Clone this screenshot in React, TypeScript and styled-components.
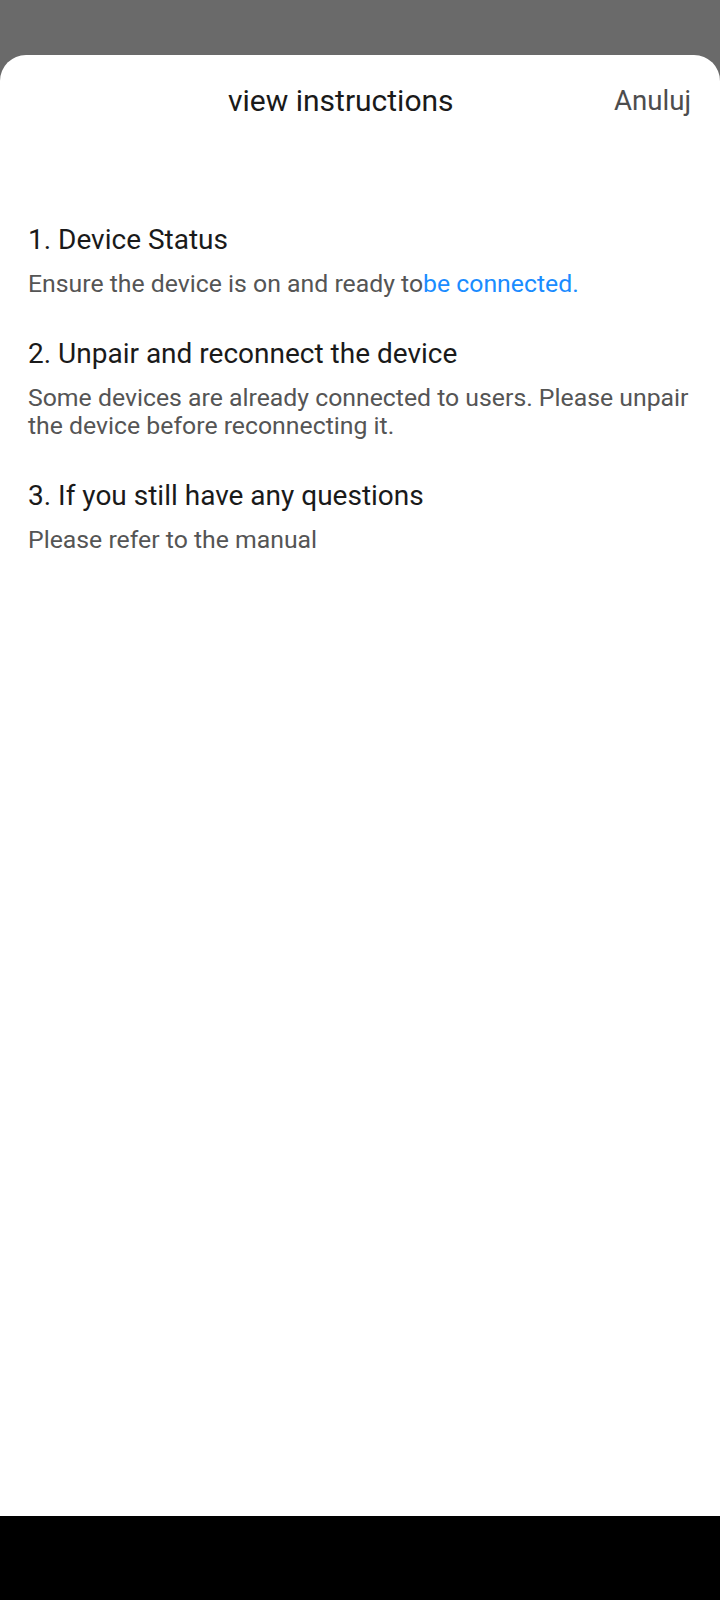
import React from "react";
import styled, { createGlobalStyle } from "styled-components";

const Global = createGlobalStyle`
  html, body { margin: 0; padding: 0; background: #6a6a6a; }
  body { font-family: Roboto, "Noto Sans", sans-serif; }
  * { box-sizing: border-box; }
`;

const Screen = styled.div`
  width: 720px;
  height: 1600px;
  display: flex;
  flex-direction: column;
  background: #6a6a6a;
`;

const Backdrop = styled.div`
  height: 55px;
  flex: none;
`;

const Sheet = styled.div`
  flex: 1;
  background: #ffffff;
  border-radius: 26px 26px 0 0;
  display: flex;
  flex-direction: column;
`;

const Header = styled.div`
  height: 90px;
  display: flex;
  align-items: center;
  padding: 0 29px 0 228px;
`;

const Title = styled.div`
  flex: 1;
  font-size: 30px;
  color: #1a1a1a;
`;

const Cancel = styled.button`
  border: none;
  background: none;
  padding: 0;
  font-family: inherit;
  font-size: 27.6px;
  color: #4d4d4d;
`;

const Steps = styled.div`
  display: flex;
  flex-direction: column;
  gap: 38px;
  padding: 77px 24px 0 28px;
`;

const Step = styled.div`
  display: flex;
  flex-direction: column;
  gap: 12px;
`;

const StepTitle = styled.div`
  font-size: 28px;
  line-height: 36px;
  color: #1a1a1a;
`;

const StepText = styled.div`
  font-size: 24.8px;
  line-height: 28px;
  color: #555555;
`;

const Link = styled.span`
  color: #1a8cff;
`;

const NavBar = styled.div`
  height: 84px;
  flex: none;
  background: #000000;
`;

export default function App() {
  return (
    <>
      <Global />
      <Screen>
        <Backdrop />
        <Sheet>
          <Header>
            <Title>view instructions</Title>
            <Cancel>Anuluj</Cancel>
          </Header>
          <Steps>
            <Step>
              <StepTitle>1. Device Status</StepTitle>
              <StepText>
                Ensure the device is on and ready to<Link>be connected.</Link>
              </StepText>
            </Step>
            <Step>
              <StepTitle>2. Unpair and reconnect the device</StepTitle>
              <StepText>
                Some devices are already connected to users. Please unpair the device before reconnecting it.
              </StepText>
            </Step>
            <Step>
              <StepTitle>3. If you still have any questions</StepTitle>
              <StepText>Please refer to the manual</StepText>
            </Step>
          </Steps>
        </Sheet>
        <NavBar />
      </Screen>
    </>
  );
}
